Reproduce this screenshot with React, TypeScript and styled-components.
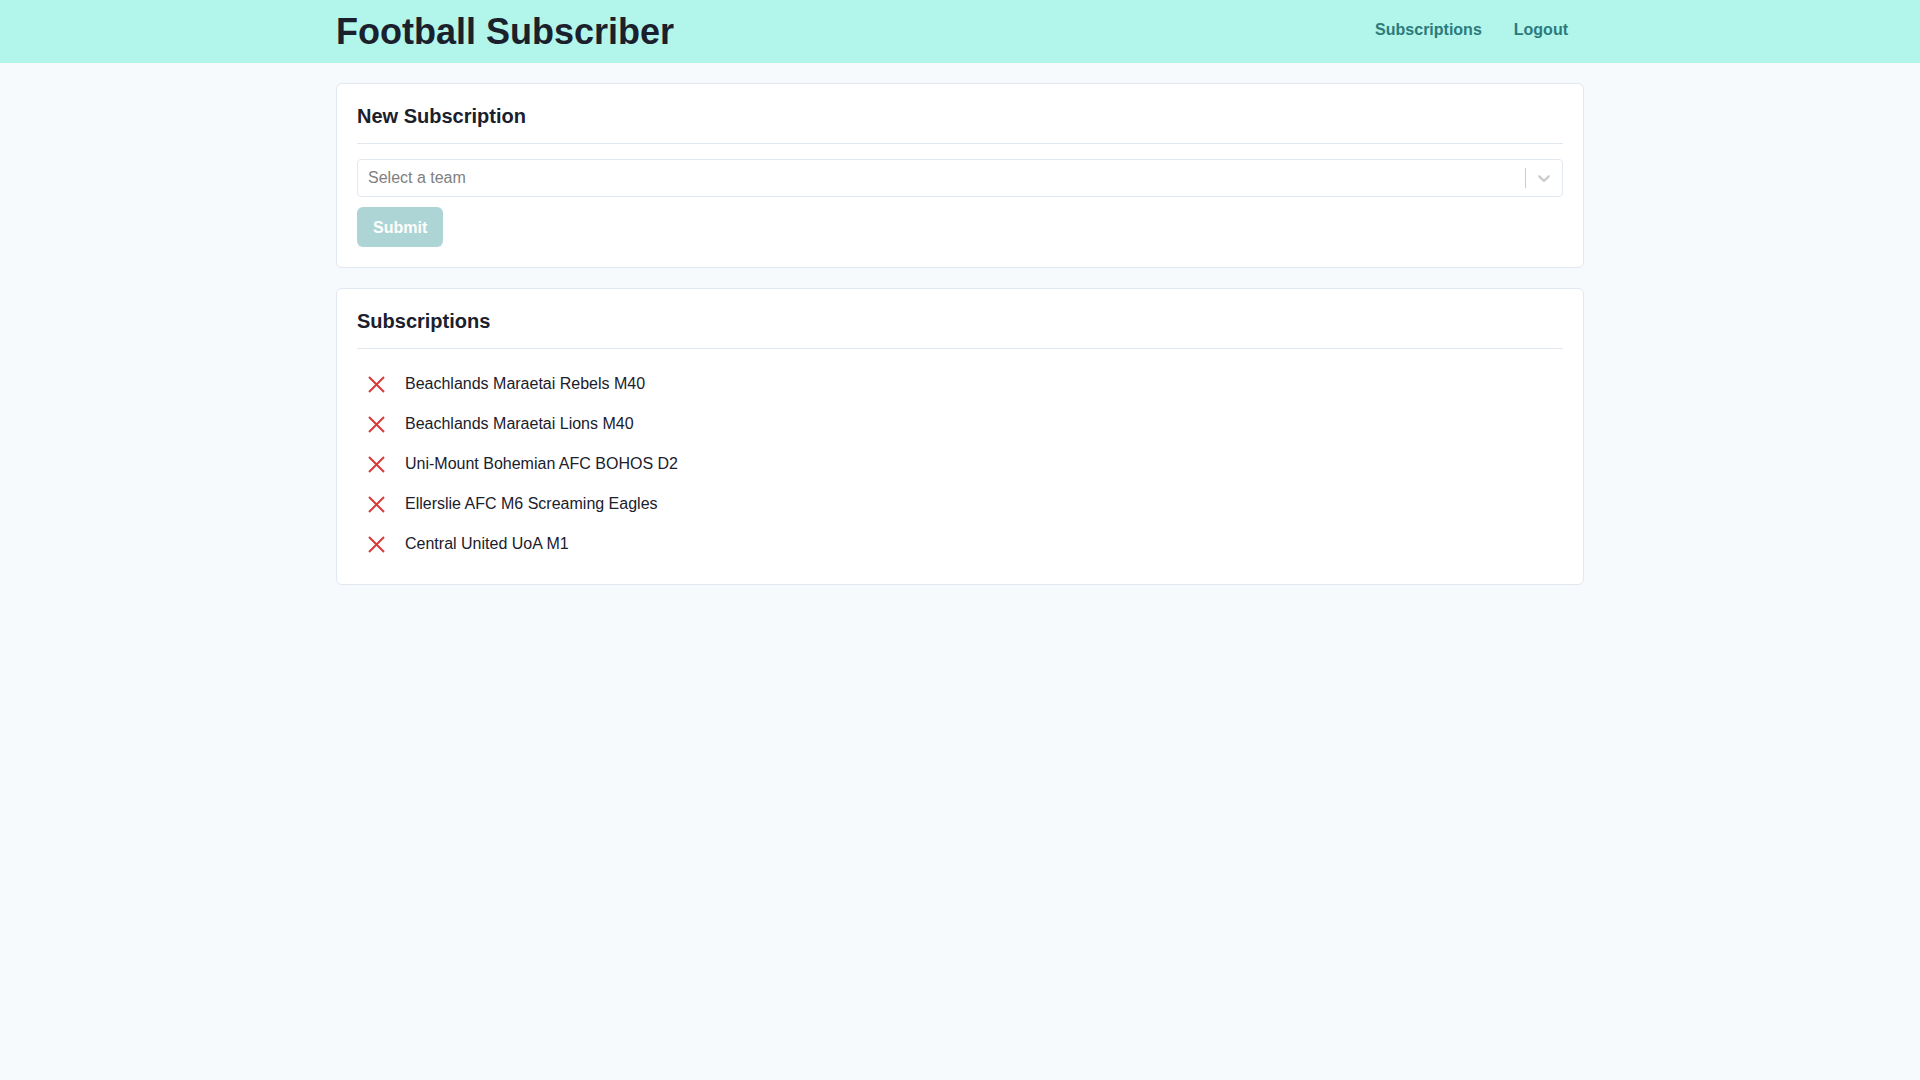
import React from "react";
import styled, { createGlobalStyle } from "styled-components";

const GlobalStyle = createGlobalStyle`
  html, body {
    margin: 0;
    padding: 0;
    background: #F7FAFC;
    font-family: "Liberation Sans", Arial, sans-serif;
    color: #1A202C;
  }
  * { box-sizing: border-box; }
`;

const Header = styled.header`
  height: 63px;
  background: #B2F5EA;
`;

const Container = styled.div`
  max-width: 1280px;
  margin: 0 auto;
  padding: 0 16px;
`;

const HeaderInner = styled(Container)`
  height: 100%;
  display: flex;
  align-items: center;
  justify-content: space-between;
`;

const Title = styled.h1`
  margin: 0;
  font-size: 36px;
  line-height: 1.2;
  font-weight: 700;
  color: #1A202C;
`;

const Nav = styled.nav`
  display: flex;
  align-items: center;
  padding-bottom: 3px;
`;

const NavLink = styled.a`
  padding: 0 16px;
  font-size: 16px;
  font-weight: 700;
  color: #2C7A7B;
  text-decoration: none;
  cursor: pointer;
`;

const Main = styled(Container)`
  padding-top: 20px;
  padding-bottom: 20px;
  display: flex;
  flex-direction: column;
  gap: 20px;
`;

const Card = styled.section`
  background: #ffffff;
  border: 1px solid #E2E8F0;
  border-radius: 6px;
  padding: 20px;
`;

const CardTitle = styled.h2`
  margin: 0;
  font-size: 20px;
  line-height: 24px;
  font-weight: 700;
  color: #1A202C;
`;

const Divider = styled.hr`
  margin: 15px 0;
  border: 0;
  border-top: 1px solid #E2E8F0;
`;

const SelectBox = styled.div`
  height: 38px;
  border: 1px solid #E2E8F0;
  border-radius: 4px;
  background: #fff;
  display: flex;
  align-items: center;
`;

const Placeholder = styled.div`
  flex: 1;
  padding-left: 10px;
  font-size: 16px;
  color: #808080;
`;

const Separator = styled.span`
  width: 1px;
  height: 20px;
  background: #cccccc;
`;

const Indicator = styled.div`
  width: 36px;
  height: 36px;
  display: flex;
  align-items: center;
  justify-content: center;
`;

const SubmitButton = styled.button`
  margin-top: 10px;
  height: 40px;
  padding: 0 16px 0 16px;
  border: 0;
  border-radius: 6px;
  background: #ADD5D5;
  color: #ffffff;
  font-family: "Liberation Sans", Arial, sans-serif;
  font-size: 16px;
  font-weight: 700;
  line-height: 42px;
  cursor: not-allowed;
`;

const List = styled.ul`
  list-style: none;
  margin: 0;
  padding: 0;
`;

const Row = styled.li`
  height: 40px;
  display: flex;
  align-items: center;
`;

const RemoveButton = styled.button`
  width: 40px;
  height: 40px;
  padding: 0 2px 0 0;
  border: 0;
  background: transparent;
  display: flex;
  align-items: center;
  justify-content: center;
  cursor: pointer;
`;

const TeamName = styled.span`
  margin-left: 8px;
  font-size: 16px;
  color: #1A202C;
`;

const Chevron = () => (
  <svg width="20" height="20" viewBox="0 0 20 20" fill="#cccccc">
    <path d="M4.516 7.548c0.436-0.446 1.043-0.481 1.576 0l3.908 3.747 3.908-3.747c0.533-0.481 1.141-0.446 1.574 0 0.436 0.445 0.408 1.197 0 1.615-0.406 0.418-4.695 4.502-4.695 4.502-0.217 0.223-0.502 0.335-0.787 0.335s-0.57-0.112-0.789-0.335c0 0-4.287-4.084-4.695-4.502s-0.436-1.17 0-1.615z" />
  </svg>
);

const CrossIcon = () => (
  <svg width="17" height="17" viewBox="0 0 17 17">
    <path d="M1 1 L16 16 M16 1 L1 16" stroke="#D63B3B" strokeWidth="2" fill="none" />
  </svg>
);

const teams = [
  "Beachlands Maraetai Rebels M40",
  "Beachlands Maraetai Lions M40",
  "Uni-Mount Bohemian AFC BOHOS D2",
  "Ellerslie AFC M6 Screaming Eagles",
  "Central United UoA M1",
];

export default function App() {
  return (
    <>
      <GlobalStyle />
      <Header>
        <HeaderInner>
          <Title>Football Subscriber</Title>
          <Nav>
            <NavLink>Subscriptions</NavLink>
            <NavLink>Logout</NavLink>
          </Nav>
        </HeaderInner>
      </Header>
      <Main>
        <Card>
          <CardTitle>New Subscription</CardTitle>
          <Divider />
          <SelectBox>
            <Placeholder>Select a team</Placeholder>
            <Separator />
            <Indicator>
              <Chevron />
            </Indicator>
          </SelectBox>
          <SubmitButton disabled>Submit</SubmitButton>
        </Card>
        <Card>
          <CardTitle>Subscriptions</CardTitle>
          <Divider />
          <List>
            {teams.map((t) => (
              <Row key={t}>
                <RemoveButton aria-label="Remove">
                  <CrossIcon />
                </RemoveButton>
                <TeamName>{t}</TeamName>
              </Row>
            ))}
          </List>
        </Card>
      </Main>
    </>
  );
}
